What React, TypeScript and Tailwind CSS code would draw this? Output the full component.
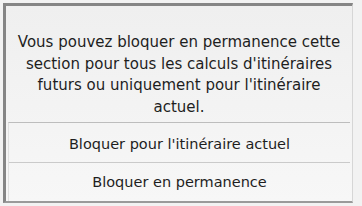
export default function App() {
  return (
    <div className="w-[362px] h-[206px] bg-[#f2f2f2] pt-[3px] pl-[3px] font-['DejaVu_Sans',sans-serif] text-[#1e1e1e]">
      <div className="w-[350px] h-[200px] border-t-[3px] border-l-[3px] border-[#858585] border-b-[2px] border-b-[#9a9a9a] border-r border-r-[#d6d6d6] bg-gradient-to-b from-[#efefef] to-[#f7f7f7] flex flex-col">
        <div className="h-[116px] pt-[26px] text-center text-[15px] leading-[21.5px]">
          Vous pouvez bloquer en permanence cette
          <br />
          section pour tous les calculs d'itinéraires
          <br />
          futurs ou uniquement pour l'itinéraire
          <br />
          actuel.
        </div>
        <div className="flex-1 mx-[2px] border-t border-[#bdbdbd] border-l border-l-[#e0e0e0] flex flex-col">
          <div className="h-[40px] flex items-center justify-center border-b border-[#cacaca] text-[14.5px] pt-[4px]">
            Bloquer pour l'itinéraire actuel
          </div>
          <div className="flex-1 flex items-center justify-center text-[14.5px] pt-[2px]">
            Bloquer en permanence
          </div>
        </div>
      </div>
    </div>
  );
}
